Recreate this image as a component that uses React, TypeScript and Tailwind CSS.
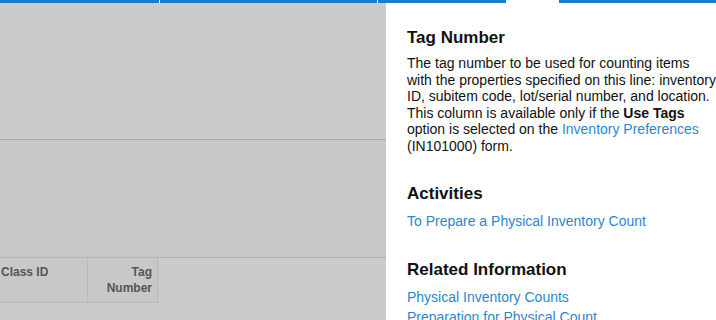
import React from "react";

const font = { fontFamily: '"Liberation Sans", Arial, sans-serif' };

const TopBar = () => (
  <div className="flex h-[3px] w-full shrink-0 bg-white">
    <div className="w-[159px] bg-[#1f7cc6]" />
    <div className="w-[1px] bg-white" />
    <div className="w-[217px] bg-[#1f7cc6]" />
    <div className="w-[1px] bg-white" />
    <div className="w-[128px] bg-[#1f7cc6]" />
    <div className="w-[53px] bg-white" />
    <div className="flex-1 bg-[#1f7cc6]" />
  </div>
);

const GridPanel = () => (
  <div className="flex w-[386px] shrink-0 flex-col bg-[#cbcbcb]">
    <div className="h-[136px] bg-[#cbcbcb]" />
    <div className="h-[1px] bg-[#a8a9a8]" />
    <div className="h-[117px] bg-[#c6c7c6]" />
    <div className="h-[1px] bg-[#b2b3b2]" />
    <div className="flex h-[45px] w-[159px] border-b border-[#b9b9b9] bg-[#c7c8c7] text-[12px] font-bold leading-[16px] text-[#555]">
      <div className="w-[88px] border-r border-[#b9b9b9] pl-[1px] pt-[6px]">Class ID</div>
      <div className="w-[70px] border-r border-[#b9b9b9] pr-[5px] pt-[6px] text-right">
        Tag
        <br />
        Number
      </div>
    </div>
    <div className="flex-1 bg-[#cbcbcb]" />
  </div>
);

const Heading = ({ children, className }: { children: React.ReactNode; className?: string }) => (
  <h2 className={`text-[17px] font-bold leading-[20px] text-[#111] ${className ?? ""}`}>{children}</h2>
);

const Link = ({ children }: { children: React.ReactNode }) => (
  <a className="text-[#2a87cf]">{children}</a>
);

const HelpPanel = () => (
  <div className="flex-1 overflow-hidden bg-white pl-[21px] pt-[25px] text-[14px] leading-[16.5px] text-[#111]">
    <Heading>Tag Number</Heading>
    <p className="mt-[7px] whitespace-nowrap">
      The tag number to be used for counting items
      <br />
      with the properties specified on this line: inventory
      <br />
      ID, subitem code, lot/serial number, and location.
      <br />
      This column is available only if the <b>Use Tags</b>
      <br />
      option is selected on the <Link>Inventory Preferences</Link>
      <br />
      (IN101000) form.
    </p>

    <Heading className="mt-[30px]">Activities</Heading>
    <div className="mt-[9px] whitespace-nowrap">
      <Link>To Prepare a Physical Inventory Count</Link>
    </div>

    <Heading className="mt-[30px]">Related Information</Heading>
    <div className="mt-[9px] flex flex-col gap-[4px] whitespace-nowrap">
      <Link>Physical Inventory Counts</Link>
      <Link>Preparation for Physical Count</Link>
    </div>
  </div>
);

export default function App() {
  return (
    <div className="flex h-[320px] w-[716px] flex-col overflow-hidden bg-white" style={font}>
      <TopBar />
      <div className="flex min-h-0 flex-1">
        <GridPanel />
        <HelpPanel />
      </div>
    </div>
  );
}
